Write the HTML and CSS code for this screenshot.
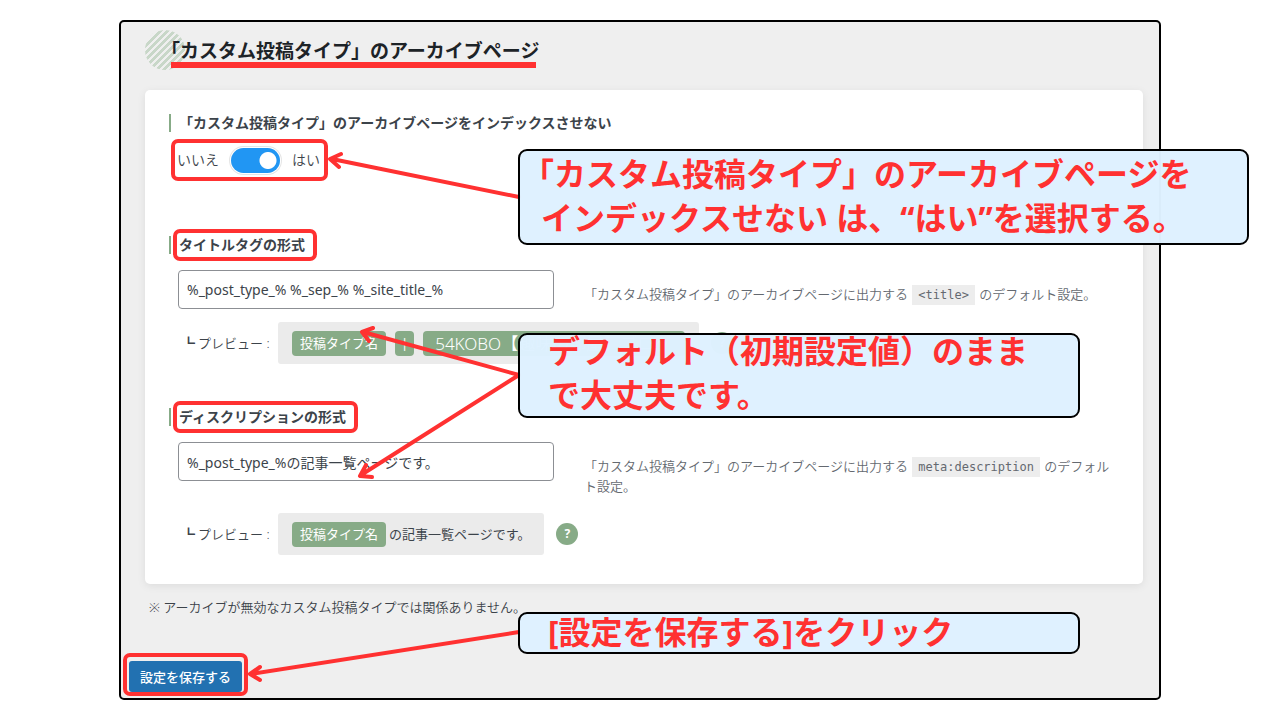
FILE: index.html
```html
<!DOCTYPE html>
<html lang="ja">
<head>
<meta charset="utf-8">
<title>「カスタム投稿タイプ」のアーカイブページ</title>
<link rel="stylesheet" href="styles.css">
</head>
<body>
<main class="stage">
  <form class="panel">
    <h1 class="title"><span class="title-text">「カスタム投稿タイプ」のアーカイブページ</span></h1>
    <div class="card">
      <section class="field field-switch">
        <h2 class="label" id="noindex-label">「カスタム投稿タイプ」のアーカイブページをインデックスさせない</h2>
        <div class="switch-row marked">
          <span>いいえ</span>
          <input class="switch" type="checkbox" role="switch" aria-labelledby="noindex-label" checked>
          <span>はい</span>
        </div>
      </section>
      <section class="field">
        <h2 class="label"><label class="marked" for="title-format">タイトルタグの形式</label></h2>
        <div class="row">
          <input class="text" id="title-format" type="text" value="%_post_type_% %_sep_% %_site_title_%">
          <p class="help">「カスタム投稿タイプ」のアーカイブページに出力する <code>&lt;title&gt;</code> のデフォルト設定。</p>
        </div>
        <div class="preview">
          <span class="preview-name"><b>┗</b>プレビュー :</span>
          <div class="preview-box"><span class="pill">投稿タイプ名</span><span class="pill pill-sep">|</span><span class="pill pill-site">54KOBO【趣味の部屋】ブログ</span></div>
          <button class="hint" type="button">?</button>
        </div>
      </section>
      <section class="field">
        <h2 class="label"><label class="marked" for="desc-format">ディスクリプションの形式</label></h2>
        <div class="row">
          <input class="text" id="desc-format" type="text" value="%_post_type_%の記事一覧ページです。">
          <p class="help">「カスタム投稿タイプ」のアーカイブページに出力する <code>meta:description</code> のデフォルト設定。</p>
        </div>
        <div class="preview">
          <span class="preview-name"><b>┗</b>プレビュー :</span>
          <div class="preview-box preview-text"><span class="pill">投稿タイプ名</span>の記事一覧ページです。</div>
          <button class="hint" type="button">?</button>
        </div>
      </section>
    </div>
    <p class="note">※ アーカイブが無効なカスタム投稿タイプでは関係ありません。</p>
    <div class="save marked"><button class="save-button" type="submit">設定を保存する</button></div>
  </form>

  <svg class="arrows" width="1280" height="720" viewBox="0 0 1280 720" aria-hidden="true">
    <path d="M519 197 332 159M341 154 330 159 339 167"/>
    <path d="M519 375 363 332M373 328 362 332 369 341"/>
    <path d="M519 375 361 475M366 465 360 476 372 477"/>
    <path d="M519 632 251 674M260 667 250 674 260 680"/>
  </svg>
  <p class="callout callout-index">「カスタム投稿タイプ」のアーカイブページを<br><span class="indent">インデックスせない は、“はい”を選択する。</span></p>
  <p class="callout callout-default"><span>デフォルト（初期設定値）のまま<br>で大丈夫です。</span></p>
  <p class="callout callout-save">[設定を保存する]をクリック</p>
</main>
</body>
</html>
```
FILE: styles.css
```css
* { box-sizing: border-box; }
body {
  margin: 0;
  background: #fff;
  color: #3c434a;
  font: 13px/20px "Noto Sans", "Noto Sans CJK JP", sans-serif;
}
h1, h2, p { margin: 0; }
input, button { font: inherit; color: inherit; }
.stage { position: relative; padding: 20px 119px; }
.panel {
  border: 2px solid #000;
  border-radius: 5px;
  background: #efefef;
  padding: 8px 16px 6px 24px;
}
.title {
  position: relative;
  padding: 5px 0 0 16px;
  height: 40px;
  color: #1d2327;
  font-size: 19px;
  font-weight: 700;
  line-height: 32px;
}
.title::before {
  content: "";
  position: absolute;
  left: 0;
  top: 0;
  width: 40px;
  height: 40px;
  border-radius: 50%;
  background: repeating-linear-gradient(135deg, #c8d7c8 0 3px, #efefef 3px 5px);
}
.title-text { position: relative; }
.title-text::after {
  content: "";
  position: absolute;
  left: 10px;
  right: 3px;
  bottom: -4px;
  height: 6px;
  background: #ff3131;
}
.card {
  margin-top: 20px;
  padding: 24px;
  border-radius: 5px;
  background: #fff;
  box-shadow: 0 2px 8px rgba(0, 0, 0, .08);
}
.field { margin-bottom: 44px; }
.field:last-child { margin-bottom: 5px; }
.field-switch { margin-bottom: 62px; }
.label {
  height: 18px;
  padding-left: 8px;
  border-left: 2px solid #87ab87;
  font-size: 14px;
  font-weight: 700;
  line-height: 18px;
}
.marked { position: relative; }
.marked::after {
  content: "";
  position: absolute;
  inset: -7px -12px -7px -6px;
  border: 4px solid #ff3131;
  border-radius: 7px;
  pointer-events: none;
}
.label .marked { display: inline-block; }
.switch-row {
  display: inline-flex;
  align-items: center;
  gap: 12px;
  margin: 14px 0 0 8px;
  height: 28px;
  font-size: 14px;
  font-weight: 350;
}
.switch-row.marked::after { inset: -7px -8px -7px -6px; }
.switch {
  appearance: none;
  width: 49px;
  height: 25px;
  margin: 0;
  border-radius: 13px;
  background: radial-gradient(circle at 37px 50%, #fff 8px, #2196f3 9px);
  box-shadow: 0 0 0 1px #fff, 0 0 0 2px #e5e5e5;
}
.row { display: flex; gap: 30px; padding-left: 9px; margin-top: 16px; }
.text {
  flex: 0 0 376px;
  height: 39px;
  padding: 0 8px;
  border: 1px solid #8c8f94;
  border-radius: 4px;
  background: #fff;
  font-size: 14px;
}
.help { flex: 1; padding-top: 14px; color: #646970; font-weight: 350; }
.help code {
  padding: 3px 6px;
  margin: 0 1px;
  background: #ededed;
  font: 12px/16px "DejaVu Sans Mono", monospace;
}
.preview { display: flex; align-items: center; margin-top: 13px; padding-left: 13px; }
.field:last-child .preview { margin-top: 17px; }
.preview-name { display: flex; gap: 3px; width: 96px; font-weight: 350; }
.preview-box {
  display: flex;
  align-items: center;
  gap: 9px;
  height: 42px;
  padding: 0 14px;
  border-radius: 3px;
  background: #ebebeb;
}
.preview-text { gap: 3px; }
.pill {
  padding: 0 8px;
  border-radius: 4px;
  background: #87ab87;
  color: #fff;
  line-height: 25px;
}
.pill-sep { padding: 0 6px; }
.pill-site { width: 262px; padding: 0 12px; font-size: 17px; font-weight: 300; white-space: nowrap; }
.hint {
  width: 22px;
  height: 22px;
  margin-left: 12px;
  padding: 0;
  border: 0;
  border-radius: 50%;
  background: #87ab87;
  color: #fff;
  font-size: 12px;
  font-weight: 700;
  line-height: 22px;
}
.note { margin: 13px 0 0 4px; font-weight: 350; }
.save { display: inline-block; margin: 44px 0 0 -16px; vertical-align: top; }
.save.marked::after { inset: -8px -6px -4px; }
.save-button {
  display: block;
  padding: 0 11px;
  height: 31px;
  border: 0;
  border-radius: 3px;
  background: #2271b1;
  color: #fff;
  font-weight: 500;
}
.arrows { position: absolute; left: 0; top: 0; }
.arrows path {
  fill: none;
  stroke: #ff3131;
  stroke-width: 4;
  stroke-linecap: round;
  stroke-linejoin: round;
}
.callout {
  position: absolute;
  left: 518px;
  padding: 0 28px;
  border: 2px solid #000;
  border-radius: 9px;
  background: rgba(222, 241, 255, .98);
  color: #ff3131;
  font-size: 32px;
  font-weight: 700;
  line-height: 44px;
  white-space: nowrap;
}
.callout-index { top: 149px; width: 731px; height: 96px; padding: 1px 2px; }
.callout-index .indent { padding-left: 19px; }
.callout-default { top: 333px; width: 562px; height: 85px; display: flex; align-items: center; }
.callout-default span { margin-top: -5px; }
.callout-save { top: 612px; width: 562px; height: 42px; line-height: 36px; }
```
